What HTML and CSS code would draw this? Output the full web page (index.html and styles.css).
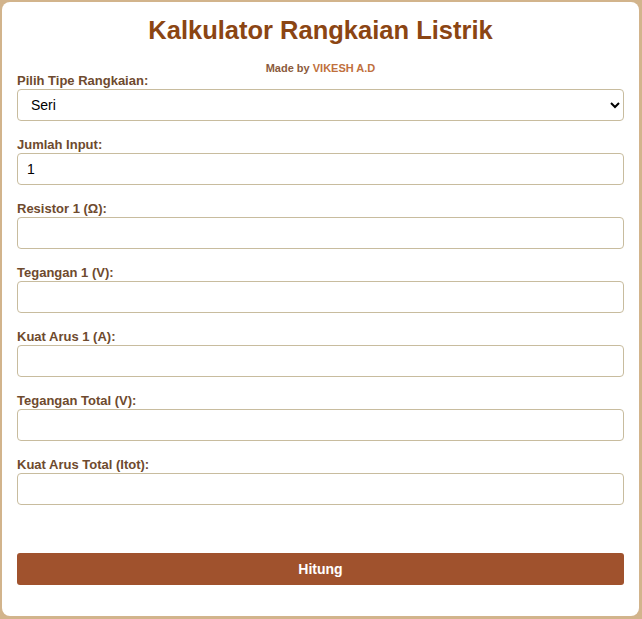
FILE: index.html
```html
<!DOCTYPE html>
<html lang="id">
<head>
<meta charset="utf-8">
<title>Kalkulator Rangkaian Listrik</title>
<link rel="stylesheet" href="styles.css">
</head>
<body>
<div class="card">
  <h1 class="title">Kalkulator Rangkaian Listrik</h1>
  <p class="credit">Made by <span class="author">VIKESH A.D</span></p>
  <div class="field">
    <label class="label" for="tipe">Pilih Tipe Rangkaian:</label>
    <select class="control select" id="tipe">
      <option>Seri</option>
      <option>Paralel</option>
    </select>
  </div>
  <div class="field">
    <label class="label" for="jumlah">Jumlah Input:</label>
    <input class="control" id="jumlah" type="text" value="1">
  </div>
  <div class="field">
    <label class="label" for="r1">Resistor 1 (Ω):</label>
    <input class="control" id="r1" type="text">
  </div>
  <div class="field">
    <label class="label" for="v1">Tegangan 1 (V):</label>
    <input class="control" id="v1" type="text">
  </div>
  <div class="field">
    <label class="label" for="i1">Kuat Arus 1 (A):</label>
    <input class="control" id="i1" type="text">
  </div>
  <div class="field">
    <label class="label" for="vt">Tegangan Total (V):</label>
    <input class="control" id="vt" type="text">
  </div>
  <div class="field">
    <label class="label" for="it">Kuat Arus Total (Itot):</label>
    <input class="control" id="it" type="text">
  </div>
  <button class="button" type="button">Hitung</button>
</div>
</body>
</html>
```
FILE: styles.css
```css
* { box-sizing: border-box; }
html, body { height: 100%; }
body {
  margin: 0;
  padding: 2px 3px 3px 2px;
  background: #d2b48c;
  font-family: "Liberation Sans", Arial, sans-serif;
}
.card {
  background: #ffffff;
  border-radius: 8px;
  height: 100%;
  padding: 11px 15px 30px 15px;
}
.title {
  margin: 0;
  text-align: center;
  color: #8b4513;
  font-size: 25.5px;
  line-height: 34px;
  font-weight: bold;
}
.credit {
  margin: 15px 0 -1px 0;
  text-align: center;
  font-size: 11px;
  line-height: 12px;
  font-weight: bold;
  color: #8b5a3c;
}
.author { color: #c0703c; }
.label {
  display: block;
  font-size: 13px;
  line-height: 16px;
  font-weight: bold;
  color: #6e4a2e;
}
.control {
  display: block;
  width: 100%;
  height: 32px;
  margin: 0 0 16px 0;
  padding: 0 9px;
  border: 1px solid #c8bc9e;
  border-radius: 4px;
  background: #ffffff;
  font-family: "Liberation Sans", Arial, sans-serif;
  font-size: 14px;
  color: #000000;
}
.select { padding-left: 9px; }
.button {
  display: block;
  width: 100%;
  height: 32px;
  margin-top: 48px;
  border: none;
  border-radius: 3px;
  background: #a0522d;
  color: #ffffff;
  font-family: "Liberation Sans", Arial, sans-serif;
  font-size: 14px;
  font-weight: bold;
}
```
